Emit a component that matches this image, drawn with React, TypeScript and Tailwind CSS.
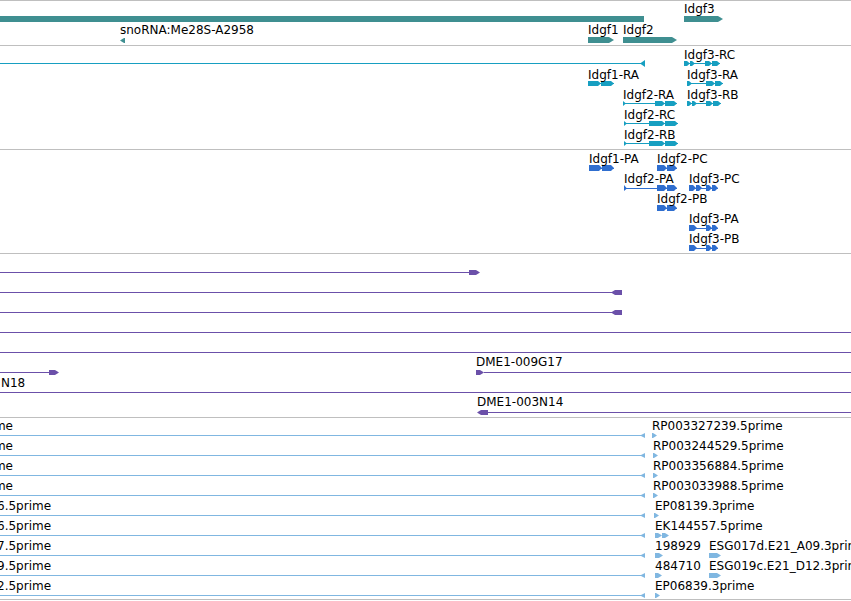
import type { ReactNode } from "react";

type Label = { t: string; x: number; b: number };
type Exon = [number, number];

const arrowR = (x1: number, x2: number, y: number, h: number, tip = 4) => {
  const t = Math.min(tip, x2 - x1);
  return (
    <polygon
      key={`r${x1}-${y}`}
      points={`${x1},${y} ${x2 - t},${y} ${x2},${y + h / 2} ${x2 - t},${y + h} ${x1},${y + h}`}
    />
  );
};

const arrowL = (x1: number, x2: number, y: number, h: number, tip = 4) => {
  const t = Math.min(tip, x2 - x1);
  return (
    <polygon
      key={`l${x1}-${y}`}
      points={`${x1},${y + h / 2} ${x1 + t},${y} ${x2},${y} ${x2},${y + h} ${x1 + t},${y + h}`}
    />
  );
};

const line = (x1: number, x2: number, y: number) => (
  <rect key={`ln${x1}-${y}`} x={x1} y={y} width={x2 - x1} height={1} />
);

function Tx({ y, h, exons, start }: { y: number; h: number; exons: Exon[]; start?: number }) {
  const first = start ?? exons[0][0];
  const last = exons[exons.length - 1][1];
  const mid = y + Math.floor(h / 2);
  return (
    <g>
      <rect x={first} y={mid} width={last - first} height={1} />
      {start !== undefined && (
        <polygon points={`${start},${y} ${start + 3},${mid + 0.5} ${start},${y + h}`} />
      )}
      {exons.map(([a, b]) => arrowR(a, b, y, h, 3))}
    </g>
  );
}

function Track({
  top,
  className,
  color,
  labels,
  children,
}: {
  top: number;
  className: string;
  color: string;
  labels: Label[];
  children: ReactNode;
}) {
  return (
    <div className={`relative overflow-hidden border-b border-[#bfbfbf] ${className}`}>
      <svg className="absolute inset-0 h-full w-full">
        <g transform={`translate(0 ${-top})`} fill={color}>
          {children}
        </g>
      </svg>
      {labels.map((l) => (
        <span
          key={l.t + l.x + l.b}
          className="absolute whitespace-nowrap text-black"
          style={{ left: l.x, top: l.b - 10 - top }}
        >
          {l.t}
        </span>
      ))}
    </div>
  );
}

const geneLabels: Label[] = [
  { t: "Idgf3", x: 684, b: 13 },
  { t: "snoRNA:Me28S-A2958", x: 120, b: 34 },
  { t: "Idgf1", x: 588, b: 34 },
  { t: "Idgf2", x: 623, b: 34 },
];

const txLabels: Label[] = [
  { t: "Idgf3-RC", x: 684, b: 59 },
  { t: "Idgf1-RA", x: 588, b: 79 },
  { t: "Idgf3-RA", x: 687, b: 79 },
  { t: "Idgf2-RA", x: 623, b: 99 },
  { t: "Idgf3-RB", x: 687, b: 99 },
  { t: "Idgf2-RC", x: 624, b: 119 },
  { t: "Idgf2-RB", x: 624, b: 139 },
];

const protLabels: Label[] = [
  { t: "Idgf1-PA", x: 589, b: 163 },
  { t: "Idgf2-PC", x: 657, b: 163 },
  { t: "Idgf2-PA", x: 624, b: 183 },
  { t: "Idgf3-PC", x: 689, b: 183 },
  { t: "Idgf2-PB", x: 657, b: 203 },
  { t: "Idgf3-PA", x: 689, b: 223 },
  { t: "Idgf3-PB", x: 689, b: 243 },
];

const cloneLabels: Label[] = [
  { t: "DME1-009G17", x: 476, b: 366 },
  { t: "N18", x: 1, b: 387 },
  { t: "DME1-003N14", x: 477, b: 406 },
];

// EST rows: left label tail, right labels, right glyphs
const estRows: { left: string; lx: number; right: Label[]; glyphs: Exon[] }[] = [
  { left: "prime", lx: -22, right: [{ t: "RP003327239.5prime", x: 652, b: 0 }], glyphs: [[652, 657]] },
  { left: "prime", lx: -22, right: [{ t: "RP003244529.5prime", x: 653, b: 0 }], glyphs: [[653, 658]] },
  { left: "prime", lx: -22, right: [{ t: "RP003356884.5prime", x: 653, b: 0 }], glyphs: [[653, 658]] },
  { left: "prime", lx: -22, right: [{ t: "RP003033988.5prime", x: 653, b: 0 }], glyphs: [[653, 658]] },
  { left: "6.5prime", lx: -3, right: [{ t: "EP08139.3prime", x: 655, b: 0 }], glyphs: [[654, 659]] },
  { left: "6.5prime", lx: -3, right: [{ t: "EK144557.5prime", x: 655, b: 0 }], glyphs: [[655, 662], [662, 669]] },
  {
    left: "7.5prime",
    lx: -3,
    right: [
      { t: "198929", x: 655, b: 0 },
      { t: "ESG017d.E21_A09.3prime", x: 709, b: 0 },
    ],
    glyphs: [[655, 663], [709, 721]],
  },
  {
    left: "9.5prime",
    lx: -3,
    right: [
      { t: "484710", x: 655, b: 0 },
      { t: "ESG019c.E21_D12.3prime", x: 709, b: 0 },
    ],
    glyphs: [[655, 662], [709, 721]],
  },
  { left: "2.5prime", lx: -3, right: [{ t: "EP06839.3prime", x: 655, b: 0 }], glyphs: [[655, 660]] },
];

const estLabels: Label[] = estRows.flatMap((r, i) => [
  { t: r.left, x: r.lx, b: 430 + i * 20 },
  ...r.right.map((l) => ({ ...l, b: 430 + i * 20 })),
]);

export default function App() {
  return (
    <div className="h-[601px] w-[851px] overflow-hidden border-t border-[#bfbfbf] bg-white font-['DejaVu_Sans',sans-serif] text-[12px] leading-none">
      {/* genes */}
      <Track top={1} className="h-[45px]" color="#3f8f91" labels={geneLabels}>
        <rect x={0} y={16} width={644} height={6} />
        {arrowR(684, 723, 16, 6, 5)}
        {arrowL(120, 125, 38, 5, 4)}
        {arrowR(588, 614, 37, 6, 5)}
        {arrowR(623, 677, 37, 6, 5)}
      </Track>

      {/* transcripts */}
      <Track top={46} className="h-[104px]" color="#179fc1" labels={txLabels}>
        {line(0, 642, 63)}
        {arrowL(640, 645, 60, 7, 5)}
        <Tx y={61} h={5} exons={[[684, 690], [690, 695], [705, 712], [712, 720]]} />
        <Tx y={81} h={5} exons={[[588, 601], [601, 614]]} />
        <Tx y={81} h={5} exons={[[687, 692], [706, 715], [715, 723]]} />
        <Tx y={101} h={5} start={623} exons={[[655, 665], [665, 677]]} />
        <Tx y={101} h={5} exons={[[687, 692], [692, 697], [706, 713], [713, 721]]} />
        <Tx y={121} h={5} start={624} exons={[[649, 665], [665, 678]]} />
        <Tx y={141} h={5} start={624} exons={[[649, 665], [665, 678]]} />
      </Track>

      {/* proteins */}
      <Track top={150} className="h-[104px]" color="#2f6ecf" labels={protLabels}>
        <Tx y={165} h={6} exons={[[589, 602], [602, 614]]} />
        <Tx y={165} h={6} exons={[[657, 667], [667, 677]]} />
        <Tx y={185} h={6} start={624} exons={[[657, 667], [667, 677]]} />
        <Tx y={185} h={6} exons={[[689, 696], [696, 702], [706, 712], [712, 718]]} />
        <Tx y={205} h={6} exons={[[657, 667], [667, 677]]} />
        <Tx y={225} h={6} exons={[[689, 697], [706, 712], [712, 718]]} />
        <Tx y={245} h={6} exons={[[689, 697], [706, 712], [712, 718]]} />
      </Track>

      {/* clones */}
      <Track top={254} className="h-[164px]" color="#6b50a9" labels={cloneLabels}>
        {line(0, 472, 272)}
        {arrowR(469, 480, 270, 5, 4)}
        {line(0, 614, 292)}
        {arrowL(611, 622, 290, 5, 4)}
        {line(0, 614, 312)}
        {arrowL(611, 622, 310, 5, 4)}
        {line(0, 851, 332)}
        {line(0, 851, 352)}
        {line(0, 52, 372)}
        {arrowR(49, 59, 370, 5, 4)}
        {arrowR(476, 484, 370, 5, 4)}
        {line(484, 851, 372)}
        {line(0, 851, 392)}
        {arrowL(477, 488, 410, 5, 4)}
        {line(487, 851, 412)}
      </Track>

      {/* ESTs */}
      <Track top={418} className="h-[182px]" color="#80b7e1" labels={estLabels}>
        {estRows.map((r, i) => {
          const y = 435 + i * 20;
          return (
            <g key={i}>
              {line(0, 642, y)}
              {arrowL(640, 645, y - 2, 5, 5)}
              {r.glyphs.map(([a, b]) => arrowR(a, b, y - 2, 5, 4))}
            </g>
          );
        })}
      </Track>
    </div>
  );
}
